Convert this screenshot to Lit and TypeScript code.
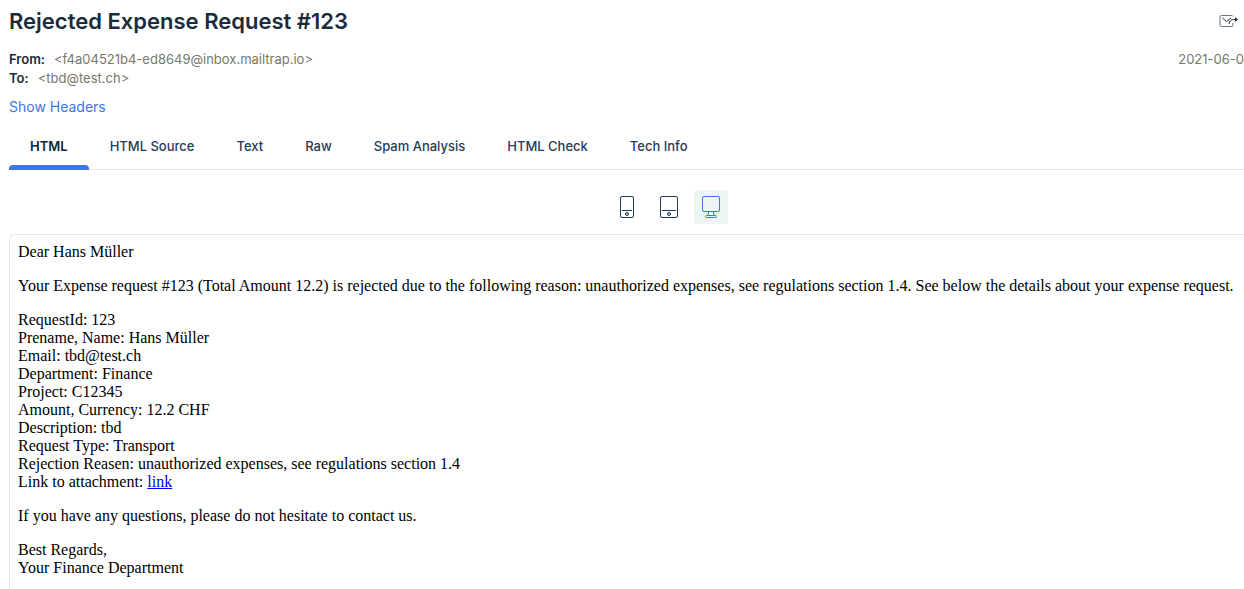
import { LitElement, html, css, svg } from "lit";
import { customElement, state } from "lit/decorators.js";
import { classMap } from "lit/directives/class-map.js";

const TABS = ["HTML", "HTML Source", "Text", "Raw", "Spam Analysis", "HTML Check", "Tech Info"];

const DETAILS = [
  "RequestId: 123",
  "Prename, Name: Hans Müller",
  "Email: tbd@test.ch",
  "Department: Finance",
  "Project: C12345",
  "Amount, Currency: 12.2 CHF",
  "Description: tbd",
  "Request Type: Transport",
  "Rejection Reasen: unauthorized expenses, see regulations section 1.4",
];

const DEVICES = [
  {
    label: "Mobile",
    icon: svg`<rect x="5.5" y="1.5" width="13" height="21" rx="1.5"/><path d="M7 15.5h10"/><circle class="home" cx="12" cy="19" r="1.5"/>`,
  },
  {
    label: "Tablet",
    icon: svg`<rect x="3.5" y="1.5" width="17" height="21" rx="1.5"/><path d="M5 15.5h14"/><circle class="home" cx="12" cy="19" r="1.5"/>`,
  },
  {
    label: "Desktop",
    icon: svg`<rect x="3.5" y="1.5" width="17" height="15" rx="1.5"/><path d="M9.5 17v2l-1.5 1.5M14.5 17v2l1.5 1.5"/><rect x="6.5" y="20.5" width="11" height="2" rx="1"/>`,
  },
];

@customElement("app-root")
export class AppRoot extends LitElement {
  @state() private tab = 0;
  @state() private device = 2;

  static styles = css`
    :host {
      display: flex;
      flex-direction: column;
      box-sizing: border-box;
      min-height: 100vh;
      padding-left: 9px;
      background: #fff;
      color: #1a2b3e;
      font: 14px/20px Inter, sans-serif;
    }
    button {
      font: inherit;
      color: inherit;
      background: none;
      border: 0;
      margin: 0;
      padding: 0;
      cursor: pointer;
    }
    svg {
      display: block;
      fill: none;
      stroke: currentColor;
    }
    .top {
      display: flex;
      justify-content: space-between;
      align-items: center;
      padding: 6px 5px 0 0;
    }
    h1 {
      margin: 0;
      font-size: 22px;
      line-height: 30px;
      font-weight: 600;
    }
    .meta {
      display: flex;
      justify-content: space-between;
      padding-top: 14px;
      font-size: 13px;
      line-height: 19px;
      color: #77776b;
    }
    dl {
      margin: 0;
    }
    dl div {
      display: flex;
      gap: 9px;
    }
    dt {
      font-weight: 600;
      color: #1a2b3e;
    }
    dd {
      margin: 0;
    }
    .headers {
      align-self: flex-start;
      margin-top: 9px;
      color: #3c77e3;
      text-decoration: none;
    }
    .tabs {
      display: flex;
      margin-top: 9px;
      border-bottom: 1px solid #e8e8e8;
    }
    .tab {
      position: relative;
      padding: 10px 21px 13px;
      font-size: 13px;
      line-height: 20px;
      font-weight: 500;
      color: #1f3c58;
    }
    .tab.on {
      color: #0d2436;
      font-weight: 600;
    }
    .tab.on::after {
      content: "";
      position: absolute;
      inset: auto 0 -1px;
      height: 5px;
      border-radius: 4px 4px 0 0;
      background: #3c77e3;
    }
    .devices {
      display: flex;
      justify-content: center;
      gap: 8px;
      padding: 20px 0 10px 85px;
    }
    .device {
      padding: 5px;
      border-radius: 4px;
      color: #1f3c58;
    }
    .device.on {
      background: #edf5f5;
      color: #3c77e3;
    }
    .home {
      fill: #b8c2cb;
    }
    .mail {
      flex: 1;
      padding: 8px;
      border: solid #e8e8e8;
      border-width: 1px 0 0 1px;
      border-radius: 6px 0 0 0;
      color: #000;
      font: 16px/18px "Liberation Serif", serif;
    }
    .mail p {
      margin: 0 0 16px;
    }
    .mail a {
      color: #0000ee;
    }
  `;

  render() {
    return html`
      <header class="top">
        <h1>Rejected Expense Request #123</h1>
        <button aria-label="Forward email">
          <svg width="20" height="14" viewBox="0 0 20 14">
            <path d="M14 2.5q-.5-1-1.5-1h-10q-1.500 0-1.500 1.500v8q0 1.500 1.500 1.500h10q1.500 0 1.500-1.500v-2" stroke="#62758a" />
            <path d="M3.500 4l4 3.500 4.500-3.500M10 10c.5-3 2-4.500 4.500-4.500h3" />
            <path d="M16 3l3 2.500-3 2.500z" fill="currentColor" stroke="none" />
          </svg>
        </button>
      </header>
      <section class="meta">
        <dl>
          <div><dt>From:</dt><dd>&lt;f4a04521b4-ed8649@inbox.mailtrap.io&gt;</dd></div>
          <div><dt>To:</dt><dd>&lt;tbd@test.ch&gt;</dd></div>
        </dl>
        <time>2021-06-0</time>
      </section>
      <a class="headers" href="#headers">Show Headers</a>
      <nav class="tabs" role="tablist">
        ${TABS.map(
          (name, i) => html`<button
            role="tab"
            aria-selected=${i === this.tab}
            class=${classMap({ tab: true, on: i === this.tab })}
            @click=${() => (this.tab = i)}
          >${name}</button>`
        )}
      </nav>
      <div class="devices">
        ${DEVICES.map(
          (d, i) => html`<button
            aria-label=${d.label}
            aria-pressed=${i === this.device}
            class=${classMap({ device: true, on: i === this.device })}
            @click=${() => (this.device = i)}
          ><svg width="24" height="24" viewBox="0 0 24 24">${d.icon}</svg></button>`
        )}
      </div>
      <article class="mail">
        <p>Dear Hans Müller</p>
        <p>Your Expense request #123 (Total Amount 12.2) is rejected due to the following reason: unauthorized expenses, see regulations section 1.4. See below the details about your expense request.</p>
        <p>${DETAILS.map((line) => html`${line}<br />`)}Link to attachment: <a href="#attachment">link</a></p>
        <p>If you have any questions, please do not hesitate to contact us.</p>
        <p>Best Regards,<br />Your Finance Department</p>
      </article>
    `;
  }
}
